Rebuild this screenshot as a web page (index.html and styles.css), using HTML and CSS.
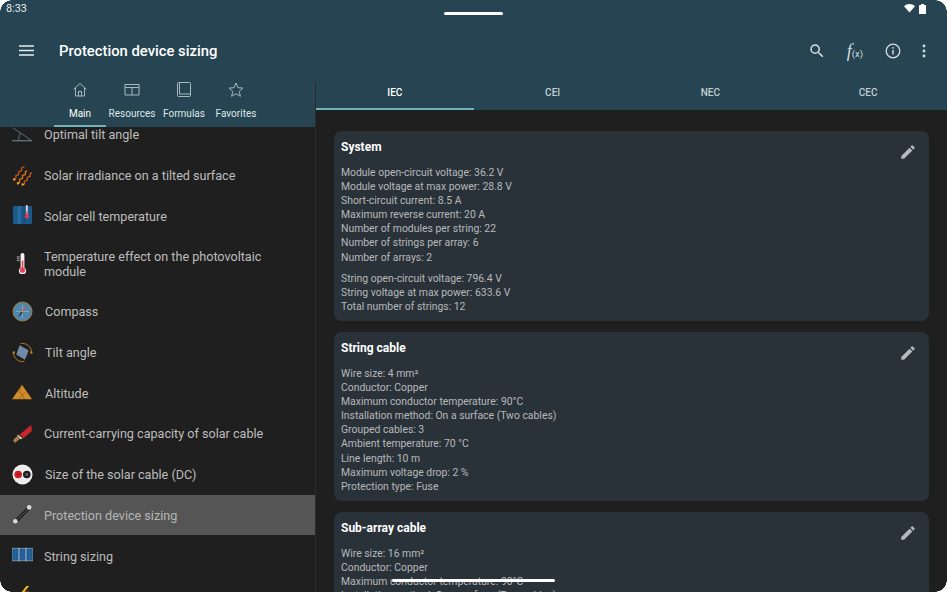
FILE: index.html
```html
<!DOCTYPE html>
<html lang="en">
<head>
    <meta charset="UTF-8" />
    <title>Protection device sizing</title>
    <link rel="stylesheet" href="styles.css">
</head>
<body>
<div class="app">
    <!-- Status bar and toolbar -->
    <div class="topbar">
        <div class="status">
            <span class="time">8:33</span>
            <span class="status-icons">
                <svg width="11" height="9" viewBox="0 0 11 9"><path d="M0 2.2C3-.7 8-.7 11 2.2L5.5 8.6z" fill="#fff"/></svg>
                <svg width="7" height="10" viewBox="0 0 7 10"><path d="M2 0h3v1h1.2c.4 0 .8.3.8.8V10H0V1.8C0 1.3.4 1 .8 1H2z" fill="#fff"/></svg>
            </span>
        </div>
        <div class="toolbar">
            <svg class="menu-icon" width="15" height="11" viewBox="0 0 15 11"><path d="M0 1h15M0 5.5h15M0 10h15" stroke="#e6ebee" stroke-width="1.4"/></svg>
            <div class="title">Protection device sizing</div>
            <div class="actions">
                <div class="action">
                    <svg width="18" height="18" viewBox="0 0 24 24"><path d="M15.5 14h-.79l-.28-.27A6.47 6.47 0 0 0 16 9.5 6.5 6.5 0 1 0 9.5 16c1.61 0 3.09-.59 4.23-1.57l.27.28v.79l5 4.99L20.49 19zm-6 0C7.01 14 5 11.99 5 9.5S7.01 5 9.5 5 14 7.01 14 9.5 11.99 14 9.5 14z" fill="#d5dde1"/></svg>
                </div>
                <div class="action fx"><i>f</i><small>(x)</small></div>
                <div class="action">
                    <svg width="18" height="18" viewBox="0 0 18 18"><circle cx="9" cy="9" r="6.8" fill="none" stroke="#d5dde1" stroke-width="1.3"/><path d="M9 8v4.5" stroke="#d5dde1" stroke-width="1.5"/><circle cx="9" cy="5.8" r=".9" fill="#d5dde1"/></svg>
                </div>
                <div class="action action-more">
                    <svg width="4" height="14" viewBox="0 0 4 14"><circle cx="2" cy="2" r="1.4" fill="#d5dde1"/><circle cx="2" cy="7" r="1.4" fill="#d5dde1"/><circle cx="2" cy="12" r="1.4" fill="#d5dde1"/></svg>
                </div>
            </div>
        </div>
    </div>

    <div class="main">
        <!-- Left column -->
        <div class="left">
            <div class="nav-tabs">
                <div class="nav-tab active">
                    <svg width="16" height="15" viewBox="0 0 16 15"><path d="M1.500 7.500 8 1.500l6.500 6M3.500 6v8h9V6M6.500 14V9.500h3V14" fill="none" stroke="#a9b8c0" stroke-width="1"/></svg>
                    <span>Main</span>
                </div>
                <div class="nav-tab">
                    <svg width="16" height="15" viewBox="0 0 16 15"><path d="M1 2.500h14v10.500H1zM1 5.500h14M8 5.500V13" fill="none" stroke="#a9b8c0" stroke-width="1"/></svg>
                    <span>Resources</span>
                </div>
                <div class="nav-tab">
                    <svg width="16" height="15" viewBox="0 0 16 15"><rect x="1.500" y=".5" width="13" height="14" rx="1" fill="none" stroke="#a9b8c0" stroke-width="1"/><path d="M3.500 .5v11.500h11" fill="none" stroke="#a9b8c0" stroke-width="1"/></svg>
                    <span>Formulas</span>
                </div>
                <div class="nav-tab">
                    <svg width="16" height="15" viewBox="0 0 16 15"><path d="m8 1 2 4.700 5 .4-3.800 3.300 1.200 4.900L8 11.700l-4.400 2.600 1.200-4.900L1 6.100l5-.4z" fill="none" stroke="#a9b8c0" stroke-width="1"/></svg>
                    <span>Favorites</span>
                </div>
            </div>

            <div class="list">
                <div class="row">
                    <svg class="row-icon" viewBox="0 0 22 22"><path d="M0 17.500h21" stroke="#5d7480" stroke-width="1.400"/><path d="M1 4l19 13" stroke="#5d7480" stroke-width="1"/><path d="M8.500 9.500 6.500 17" stroke="#5d7480" stroke-width="1"/></svg>
                    <span>Optimal tilt angle</span>
                </div>
                <div class="row">
                    <svg class="row-icon" viewBox="0 0 22 22"><g fill="none" stroke-width="1.400" stroke-linejoin="round"><path d="M1 15l3-1 0-3 3-1 0-3 3-1 0-3 3-1" stroke="#c2521a"/><path d="M5 19l3-1 0-3 3-1 0-3 3-1 0-3 2-1" stroke="#d9781c"/><path d="M10 21l3-1 0-3 3-1 0-3 3-1 0-3 2-1" stroke="#c8561a"/></g><path d="M1 14l3 1-2 2zM5 18l3 1-2 2zM10 19l3 1-2 2z" fill="#f3b92a"/></svg>
                    <span>Solar irradiance on a tilted surface</span>
                </div>
                <div class="row">
                    <svg class="row-icon" viewBox="0 0 22 22"><rect x="1" y="1" width="20" height="19" rx="1.500" fill="#1c5a8c"/><path d="M6 1h3v19H6z" fill="#2a6fa3"/><path d="M12 1h2v19h-2z" fill="#174e7b"/><rect x="14.500" y="0" width="2" height="11" rx="1" fill="#e9d6da"/><circle cx="15.500" cy="12" r="2.200" fill="#e53950"/><path d="M15.500 6v5" stroke="#e53950" stroke-width="1"/></svg>
                    <span>Solar cell temperature</span>
                </div>
                <div class="row row-tall">
                    <svg class="row-icon" viewBox="0 0 22 22"><path d="M9 2c0-1 .800-2 2-2s2 1 2 2v13.500a3.800 3.800 0 1 1-4 0z" fill="#f4f4f4"/><rect x="10.200" y="8" width="1.700" height="9" fill="#ea3f55"/><circle cx="11" cy="18" r="2.700" fill="#ea3f55"/><path d="M5 4h3M5 6h3M5 8h3" stroke="#cfcfcf" stroke-width=".8"/></svg>
                    <span>Temperature effect on the photovoltaic module</span>
                </div>
                <div class="row row-shift">
                    <svg class="row-icon" viewBox="0 0 22 22"><circle cx="11" cy="11" r="10" fill="#4f86ab" stroke="#a9793c" stroke-width="1"/><path d="M4 11h14M11 4v14" stroke="#b7cbd8" stroke-width=".5"/><path d="M15.500 5 10.300 10.300 11.700 11.700z" fill="#e2503a"/><path d="M6.500 17 10.300 10.300 11.700 11.700z" fill="#1d2b36"/><circle cx="11" cy="11" r="1" fill="#d9a23a"/></svg>
                    <span>Compass</span>
                </div>
                <div class="row row-shift">
                    <svg class="row-icon" viewBox="0 0 22 22"><path d="M1.500 11A9.500 9.500 0 0 0 13 20.300M20.500 11A9.500 9.500 0 0 0 9 1.700" fill="none" stroke="#c47a22" stroke-width="1"/><path d="M8 3.500 17.500 9 13.500 18.500 4.500 13z" fill="#6f8ba8"/><circle cx="1.800" cy="11" r="1.300" fill="#c47a22"/><circle cx="20.200" cy="11" r="1.300" fill="#c47a22"/></svg>
                    <span>Tilt angle</span>
                </div>
                <div class="row row-shift">
                    <svg class="row-icon" viewBox="0 0 22 22"><path d="M10.500 3 21 18H0z" fill="#d08c28"/><path d="M10.500 3 7 10l4 3 2 5M7 18l4-5 3-2" fill="none" stroke="#8a5a1a" stroke-width=".7"/></svg>
                    <span>Altitude</span>
                </div>
                <div class="row">
                    <svg class="row-icon" viewBox="0 0 22 22"><path d="M8 12 20 2l1 6-9 8z" fill="#c8262b"/><path d="M6 12l5 4-2 1-3-3z" fill="#e8e4dc"/><path d="M1 18l5-5 3 3-6 5z" fill="#a87a4e"/></svg>
                    <span>Current-carrying capacity of solar cable</span>
                </div>
                <div class="row row-shift">
                    <svg class="row-icon" viewBox="0 0 22 22"><circle cx="11" cy="11" r="10.500" fill="#ededed"/><circle cx="6.500" cy="11" r="4" fill="#d21f26"/><circle cx="15.500" cy="11" r="4" fill="#1d1d1d"/><circle cx="15.500" cy="11" r="1.800" fill="#555"/><circle cx="6.500" cy="11" r="1.800" fill="#b01a20"/></svg>
                    <span>Size of the solar cable (DC)</span>
                </div>
                <div class="row row-shift selected">
                    <svg class="row-icon" viewBox="0 0 22 22"><path d="M4 18 18 4" stroke="#1d1d1d" stroke-width="3.600"/><path d="M5 17 17 5" stroke="#8a8a8a" stroke-width=".6"/><circle cx="3.500" cy="18" r="2.400" fill="#dadada"/><circle cx="18" cy="3.500" r="2.400" fill="#dadada"/></svg>
                    <span>Protection device sizing</span>
                </div>
                <div class="row">
                    <svg class="row-icon" viewBox="0 0 22 22"><rect y="3.500" width="22" height="13" fill="#1d5a92" stroke="#7d96a8" stroke-width="1"/><path d="M7.300 3v14M14.600 3v14" stroke="#c3ccd2" stroke-width="1"/><path d="M0 7.500h22M0 12h22M3.700 3v14M11 3v14M18.300 3v14" stroke="#3a76a8" stroke-width=".5"/></svg>
                    <span>String sizing</span>
                </div>
                <div class="row">
                    <svg class="row-icon" viewBox="0 0 22 22"><path d="M15 0 9 8h5L8 18l10-12h-5l5-6z" fill="#f2b81f"/></svg>
                </div>
            </div>
        </div>

        <!-- Right column -->
        <div class="right">
            <div class="std-tabs">
                <div class="std-tab active">IEC</div>
                <div class="std-tab">CEI</div>
                <div class="std-tab">NEC</div>
                <div class="std-tab">CEC</div>
            </div>
            <div class="cards">
                <div class="card">
                    <svg class="edit" width="18" height="18" viewBox="0 0 24 24"><path d="M3 17.250V21h3.750L17.810 9.940l-3.750-3.750zM20.710 7.040a1 1 0 0 0 0-1.410l-2.340-2.340a1 1 0 0 0-1.410 0l-1.830 1.830 3.750 3.750z" fill="#b4b9bc"/></svg>
                    <h3>System</h3>
                    <p>Module open-circuit voltage: 36.2 V</p>
                    <p>Module voltage at max power: 28.8 V</p>
                    <p>Short-circuit current: 8.5 A</p>
                    <p>Maximum reverse current: 20 A</p>
                    <p>Number of modules per string: 22</p>
                    <p>Number of strings per array: 6</p>
                    <p>Number of arrays: 2</p>
                    <p class="gap">String open-circuit voltage: 796.4 V</p>
                    <p>String voltage at max power: 633.6 V</p>
                    <p>Total number of strings: 12</p>
                </div>
                <div class="card">
                    <svg class="edit" width="18" height="18" viewBox="0 0 24 24"><path d="M3 17.250V21h3.750L17.810 9.940l-3.750-3.750zM20.710 7.040a1 1 0 0 0 0-1.410l-2.340-2.340a1 1 0 0 0-1.410 0l-1.830 1.830 3.750 3.750z" fill="#b4b9bc"/></svg>
                    <h3>String cable</h3>
                    <p>Wire size: 4 mm²</p>
                    <p>Conductor: Copper</p>
                    <p>Maximum conductor temperature: 90°C</p>
                    <p>Installation method: On a surface (Two cables)</p>
                    <p>Grouped cables: 3</p>
                    <p>Ambient temperature: 70 °C</p>
                    <p>Line length: 10 m</p>
                    <p>Maximum voltage drop: 2 %</p>
                    <p>Protection type: Fuse</p>
                </div>
                <div class="card">
                    <svg class="edit" width="18" height="18" viewBox="0 0 24 24"><path d="M3 17.250V21h3.750L17.810 9.940l-3.750-3.750zM20.710 7.040a1 1 0 0 0 0-1.410l-2.340-2.340a1 1 0 0 0-1.410 0l-1.830 1.830 3.750 3.750z" fill="#b4b9bc"/></svg>
                    <h3>Sub-array cable</h3>
                    <p>Wire size: 16 mm²</p>
                    <p>Conductor: Copper</p>
                    <p>Maximum conductor temperature: 90°C</p>
                    <p>Installation method: On a surface (Two cables)</p>
                </div>
            </div>
        </div>
    </div>

    <!-- System overlays -->
    <div class="pill-top"></div>
    <div class="pill-bottom"></div>
    <div class="corner corner-tl"></div>
    <div class="corner corner-tr"></div>
    <div class="corner corner-bl"></div>
    <div class="corner corner-br"></div>
</div>
</body>
</html>
```

FILE: styles.css
```css
/* Global Reset */
* {
    box-sizing: border-box;
    margin: 0;
    padding: 0;
}

body {
    font-family: Roboto, "Liberation Sans", sans-serif;
    background: #1f1f1f;
    overflow: hidden;
}

.app {
    position: relative;
    width: 947px;
    height: 592px;
    display: flex;
    flex-direction: column;
    overflow: hidden;
    background: #1f1f1f;
}

/* Status bar & toolbar */
.topbar {
    background: #264451;
    height: 82px;
    flex: none;
}

.status {
    height: 17px;
    display: flex;
    justify-content: space-between;
    align-items: center;
    padding: 0 21px 0 6px;
}

.time {
    color: #e8edef;
    font-size: 10.800px;
}

.status-icons {
    display: flex;
    align-items: center;
    gap: 4px;
}

.toolbar {
    height: 34px;
    margin-top: 17px;
    display: flex;
    align-items: center;
    padding-left: 19px;
}

.menu-icon {
    margin-bottom: 2px;
}

.title {
    margin-left: 25px;
    color: #fff;
    font-size: 14.800px;
    font-weight: 500;
}

.actions {
    margin-left: auto;
    display: flex;
    align-items: center;
    padding-right: 11px;
}

.action {
    width: 38px;
    display: flex;
    justify-content: center;
    align-items: center;
}

.action-more {
    width: 24px;
}

.fx {
    color: #d5dde1;
    font-family: "Liberation Serif", serif;
    font-size: 18px;
    line-height: 1;
}

.fx small {
    font-family: Roboto, sans-serif;
    font-size: 9.500px;
    margin-top: 5px;
}

/* Main area */
.main {
    flex: 1;
    display: flex;
    min-height: 0;
}

.left {
    width: 316px;
    flex: none;
    border-right: 1px solid #2b2b2b;
    display: flex;
    flex-direction: column;
    overflow: hidden;
}

.nav-tabs {
    position: relative;
    z-index: 1;
    height: 45px;
    flex: none;
    background: #264451;
    display: flex;
    padding-left: 54px;
}

.nav-tab {
    width: 52px;
    display: flex;
    flex-direction: column;
    align-items: center;
    color: #dfe6e9;
    font-size: 10px;
    line-height: 12px;
    white-space: nowrap;
    gap: 11px;
}

.nav-tab.active {
    color: #fff;
    border-bottom: 2px solid #6fb4bb;
}

.list {
    margin-top: -13px;
}

.row {
    height: 40.700px;
    display: flex;
    align-items: center;
    padding-left: 12px;
    gap: 11px;
    color: #bdbdbd;
    font-size: 12.600px;
    line-height: 15px;
}

.row-tall {
    height: 55px;
}

.row span {
    width: 240px;
    padding-top: 1px;
}

.row-shift {
    gap: 12px;
}

.selected {
    background: #555;
    color: #b5b5b5;
    gap: 11px;
}

.row-icon {
    width: 21px;
    height: 21px;
    flex: none;
}

.right {
    flex: 1;
    min-width: 0;
    overflow: hidden;
    display: flex;
    flex-direction: column;
}

.std-tabs {
    height: 28px;
    flex: none;
    background: #264451;
    display: flex;
}

.std-tab {
    flex: 1;
    text-align: center;
    color: #c2ced3;
    font-size: 10px;
    font-weight: 500;
    line-height: 22px;
}

.std-tab.active {
    color: #fff;
    border-bottom: 2px solid #6fb4bb;
}

.cards {
    padding: 21px 18px 0;
    display: flex;
    flex-direction: column;
    gap: 11px;
}

.card {
    position: relative;
    flex: none;
    background: #2a3239;
    border-radius: 8px;
    padding: 7px;
    color: #b6b9bb;
    font-size: 10.400px;
    line-height: 14.100px;
}

.card h3 {
    color: #fff;
    font-size: 12px;
    font-weight: 700;
    line-height: 18px;
    margin-bottom: 10px;
}

.gap {
    margin-top: 7px;
}

.edit {
    position: absolute;
    top: 12px;
    right: 12px;
}

/* System overlays */
.pill-top {
    position: absolute;
    left: 444px;
    top: 12px;
    width: 59px;
    height: 3px;
    border-radius: 2px;
    background: #fff;
}

.pill-bottom {
    position: absolute;
    left: 392px;
    top: 579px;
    width: 163px;
    height: 3px;
    border-radius: 2px;
    background: #fff;
}

.corner {
    position: absolute;
    width: 12px;
    height: 12px;
    background: radial-gradient(circle at var(--cx) var(--cy), transparent 11.500px, #fff 12px);
}

.corner-tl { left: 0; top: 0; --cx: 100%; --cy: 100%; }
.corner-tr { right: 0; top: 0; --cx: 0; --cy: 100%; }
.corner-bl { left: 0; bottom: 0; --cx: 100%; --cy: 0; }
.corner-br { right: 0; bottom: 0; --cx: 0; --cy: 0; }
```
